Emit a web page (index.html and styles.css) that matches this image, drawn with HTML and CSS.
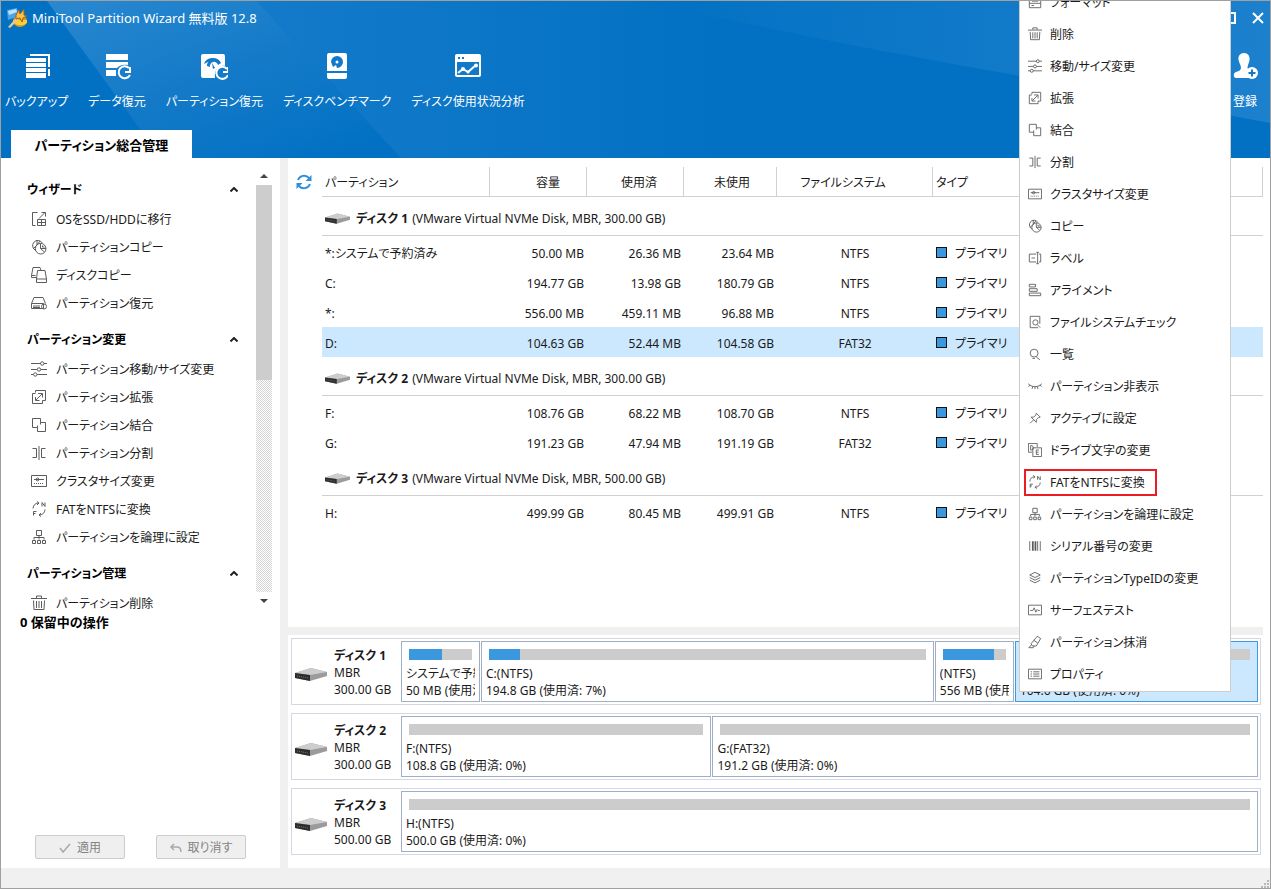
FILE: index.html
```html
<!DOCTYPE html>
<html lang="ja">
<head>
  <meta charset="utf-8">
  <meta name="viewport" content="width=device-width, initial-scale=1.0">
  <title>MiniTool Partition Wizard</title>
  <link rel="stylesheet" href="styles.css">
</head>
<body>

  <!-- icons -->
  <svg class="sprite" aria-hidden="true">
    <symbol id="i-migrate" viewBox="0 0 16 16"><path d="M6.5 1.5h-5v13h3M6.500 8.500v6h8v-6zM6.500 11.500h8M10.500 8.500v6M8 7.500l6-6M10.500 1.500h4v4"/></symbol>
    <symbol id="i-copy" viewBox="0 0 16 16"><path d="M5 11.500A5.200 5.200 0 1 1 11.300 4M6 1v5L2.500 9.500M6 6l3-4"/><circle cx="9.700" cy="9.700" r="5.300"/><path d="M9.500 4.500v5h5.500M9.500 9.500l4 3.500M11.500 6.500v1.500h2"/></symbol>
    <symbol id="i-diskcopy" viewBox="0 0 16 16"><path d="M5.500 10.500h-5v-2l1.500-8h7l1 3M.500 8.500h4"/><path d="M6.500 3.500h7.500l1.500 8.500v3.500h-10v-3.500zM5.500 12h10"/></symbol>
    <symbol id="i-recover" viewBox="0 0 16 16"><path d="M.500 8.500l2.500-6h9l2.500 6M.500 8.500h12v5h-12zM2 11h7M2 12.500h7"/><circle class="solid" cx="13" cy="11.500" r="2.500"/></symbol>
    <symbol id="i-move" viewBox="0 0 16 16"><path d="M0 2.500h9.500M13 2.500h3M0 8.500h6M10 8.500h6M0 13.500h2.500M6 13.500h10"/><circle cx="11.200" cy="2.500" r="1.700"/><circle cx="8" cy="8.500" r="1.700"/><circle cx="4.300" cy="13.500" r="1.700"/></symbol>
    <symbol id="i-extend" viewBox="0 0 16 16"><path d="M4.500 3.500v-2h10v10h-3M4.500 4.500h-3v10h10v-3M5 11l6-6M7 4.500h4.500v4M4.500 8v3.500h4"/></symbol>
    <symbol id="i-merge" viewBox="0 0 16 16"><path d="M1.500 1.500h8v4h5v9h-8v-4h-5zM9.500 5.500v2M6.500 10.500v-2"/></symbol>
    <symbol id="i-split" viewBox="0 0 16 16"><path d="M1.500 3.500h4v9h-4M14.500 3.500h-4v9h4M8 1v14"/></symbol>
    <symbol id="i-cluster" viewBox="0 0 16 16"><path d="M.500 2.500h15v11h-15zM3 6.500h10"/><path d="M3 10.500h10" stroke-dasharray="1 1"/><circle cx="6.500" cy="6.500" r="1.400"/></symbol>
    <symbol id="i-convert" viewBox="0 0 16 16"><path d="M2 7.500A6 6 0 0 1 7.500 2M6 .500l2 1.500-2 2M14 8.500A6 6 0 0 1 8.500 14M10 12l-2 2 2 1.500M11 5.500v-4l3 4v-4M2.500 14.500v-4h3M2.500 12.500h2"/></symbol>
    <symbol id="i-logical" viewBox="0 0 16 16"><path d="M5.500 1.500h5v5h-5zM8 6.500v4M3 10.500v-2h10v2M1.500 11.500h3v3h-3zM6.500 11.500h3v3h-3zM11.500 11.500h3v3h-3z"/></symbol>
    <symbol id="i-delete" viewBox="0 0 16 16"><path d="M0 3.500h16M5.500 3v-2h5v2M2.500 5.500l.5 9h10l.5-9M5.500 6v7M8 6v7M10.500 6v7"/></symbol>
    <symbol id="i-format" viewBox="0 0 16 16"><path d="M1.500 2.500h13v12h-13zM1.500 9.500h13M4 12h3M4.500 7h7v-4"/></symbol>
    <symbol id="i-label" viewBox="0 0 16 16"><path d="M9.500 3.500h-8v9h8M12.500 3.500h2v9h-2M11 1.500v13M9.500 1.500h3M9.500 14.500h3M4 8h4"/></symbol>
    <symbol id="i-align" viewBox="0 0 16 16"><path d="M1.500 1.500h7v3h-7zM1.500 6.500h9v3h-9zM1.500 11.500h13v3h-13z"/></symbol>
    <symbol id="i-check" viewBox="0 0 16 16"><path d="M13.500 10v-8.500h-11v13h9"/><circle cx="8.500" cy="8.500" r="3"/><path d="M10.500 11l3.500 3.500"/></symbol>
    <symbol id="i-search" viewBox="0 0 16 16"><circle cx="7" cy="7" r="4.500"/><path d="M9.500 11.500l4 3M5 13h3"/></symbol>
    <symbol id="i-hide" viewBox="0 0 16 16"><path d="M0 5c3 5 13 5 16 0M2.500 7l-2 1.500M5.500 8.500l-1 3M10.500 8.500l1 3M13.500 7l2 1.500M8 9v2.500"/></symbol>
    <symbol id="i-pin" viewBox="0 0 16 16"><path d="M9.500 2.500l4.500 4.500-2 .5-2.500 2.500v3l-6-6h3l2.500-2.500zM6.500 10l-4 4"/></symbol>
    <symbol id="i-letter" viewBox="0 0 16 16"><path d="M4.500 10.500h-4v-10h10v4M3 3v5h1.500c2 0 2-5 0-5zM5.500 5.500h10v10h-10zM12.500 8h-3v5h3M9.500 10.500h2.500"/></symbol>
    <symbol id="i-serial" viewBox="0 0 16 16"><path d="M2 2.500v11M14 2.500v11M11 2.500v11"/><path d="M5.500 2.500v11M8.500 2.500v11" stroke-width="2"/></symbol>
    <symbol id="i-type" viewBox="0 0 16 16"><path d="M8 1.500l6 3-6 3-6-3zM2 7.500l6 3 6-3M2 10.500l6 3 6-3"/></symbol>
    <symbol id="i-surface" viewBox="0 0 16 16"><path d="M.500 2.500h15v11h-15zM2.500 8.500h3l1.500-3 2 5 1.500-3 1 1h2"/></symbol>
    <symbol id="i-wipe" viewBox="0 0 16 16"><path d="M10.500 1.500l4 2.500-5 8.500h-4.500l-1.500-2.500zM6.500 6l4.500 3M4 11l-3 3.500h5l1-2"/></symbol>
    <symbol id="i-props" viewBox="0 0 16 16"><path d="M.500 2.500h15v11h-15zM3 5.500h1.500M6 5.500h7M3 8h1.500M6 8h7M3 10.500h1.500M6 10.500h7"/></symbol>
    <symbol id="i-drive" viewBox="0 0 32 14">
      <polygon points="0,5 16,0 32,4 32,8 15,13 0,10" fill="#9b9b9b"/>
      <polygon points="0,5 16,0 32,4 15,7" fill="#cdcdcd"/>
      <polygon points="0,5 15,7 15,13 0,10" fill="#2d2d2d"/>
      <path d="M2 8l11 2" stroke="#777" stroke-dasharray="1 1"/>
    </symbol>
  </svg>

  <div class="window">
    <header class="header">
      <svg class="header-bg" viewBox="0 0 1269 157" preserveAspectRatio="none" aria-hidden="true">
        <defs>
          <linearGradient id="beam" x1="0" y1="0" x2=".8" y2="1">
            <stop offset="0" stop-color="#3a92d5"/>
            <stop offset=".55" stop-color="#1a7dca"/>
            <stop offset="1" stop-color="#0271c3"/>
          </linearGradient>
          <linearGradient id="wide" x1="0" y1="0" x2="1" y2="0">
            <stop offset="0" stop-color="#147aca"/>
            <stop offset="1" stop-color="#0271c3"/>
          </linearGradient>
          <linearGradient id="sweep" x1="0" y1="0" x2="1" y2="0">
            <stop offset="0" stop-color="#0271c3"/>
            <stop offset="1" stop-color="#1c80cd"/>
          </linearGradient>
        </defs>
        <rect width="1269" height="157" fill="#0271c3"/>
        <polygon points="46,0 256,0 400,157 160,157" fill="url(#beam)" opacity=".7"/>
        <polygon points="256,0 720,0 720,157 400,157" fill="url(#wide)"/>
        <path d="M640 0H1269V122Q1140 98 1014 74Q820 40 640 0z" fill="url(#sweep)"/>
      </svg>

      <div class="titlebar">
        <svg class="logo" viewBox="0 0 22 22" aria-hidden="true">
          <ellipse cx="14" cy="14" rx="7" ry="6" fill="#d99a1e"/>
          <path d="M7 14a8 6 0 0 0 14 2v-3H7z" fill="#f8cf3c"/>
          <path d="M1 3l10-2 2 8-11 4z" fill="#4ea3e4"/>
          <path d="M2 4l8-2 1 3-8 3z" fill="#bfe3fb"/>
          <path d="M2 20l9-10 2 2-9 9z" fill="#e9c88c"/>
          <path d="M10 8l3-5 1 4 4-5v6l3 1-4 2-1 4-2-4-4 1z" fill="#f6c14a" stroke="#a35f15"/>
        </svg>
        <span class="title">MiniTool Partition Wizard 無料版 12.8</span>
        <div class="window-buttons">
          <button type="button" aria-label="最大化"><svg viewBox="0 0 12 12"><path d="M1 1h10v10H1z"/></svg></button>
          <button type="button" aria-label="閉じる"><svg viewBox="0 0 12 12"><path d="M1 1l10 10M11 1L1 11"/></svg></button>
        </div>
      </div>

      <nav class="toolbar">
        <button type="button" class="tool">
          <svg viewBox="0 0 28 28"><path d="M7 1h20v13h-2V3H7zM25 16h2v7h-2z"/><path d="M3 5h20v4H3zM3 10h20v4H3zM3 15h20v4H3zM3 20h20v5H3z"/></svg>
          <span>バックアップ</span>
        </button>
        <button type="button" class="tool">
          <svg viewBox="0 0 28 28"><path d="M3 1h22v6H3zM3 9h22v3c-6-1-9 1-11 3H3zM3 17h10v6H3z"/><path class="line" d="M26 15a6 6 0 1 0 1 7M27 14v5h-5"/></svg>
          <span>データ復元</span>
        </button>
        <button type="button" class="tool">
          <svg viewBox="0 0 28 28"><path d="M1 3a2 2 0 0 1 2-2h20a2 2 0 0 1 2 2v10c-6-1-11 4-10 12H3a2 2 0 0 1-2-2z"/><path class="cut" d="M4 11a9 8 0 0 1 17-1l-3 2a4 4 0 0 0-8 2l-3-1a5 5 0 0 1 3-5zM12 10l3 5-2 1z"/><path class="line" d="M27 16a6 6 0 1 0 1 6M28 14v5h-5"/></svg>
          <span>パーティション復元</span>
        </button>
        <button type="button" class="tool">
          <svg viewBox="0 0 28 28"><path d="M4 2a2 2 0 0 1 2-2h16a2 2 0 0 1 2 2v16H4zM4 20h20v4a2 2 0 0 1-2 2H6a2 2 0 0 1-2-2z"/><path class="cut" d="M8 9a6 6 0 1 1 6 6l-1-3-3 2z"/><circle cx="14" cy="9" r="1.500"/></svg>
          <span>ディスクベンチマーク</span>
        </button>
        <button type="button" class="tool">
          <svg viewBox="0 0 28 28"><path d="M1 3a2 2 0 0 1 2-2h22a2 2 0 0 1 2 2v19a2 2 0 0 1-2 2H3a2 2 0 0 1-2-2z"/><path class="cut" d="M4 4h2v2H4zM8 4h2v2H8zM3 9h22v13H3z"/><path class="line" d="M4 20l5-4 5 3 8-7"/><circle cx="9" cy="16" r="2"/><circle cx="14" cy="19" r="1.500"/><circle cx="22" cy="12.500" r="2"/></svg>
          <span>ディスク使用状況分析</span>
        </button>
        <button type="button" class="tool register">
          <svg viewBox="0 0 28 28"><path d="M13 0c4 0 6 3 5.500 7-.3 3-2 5-2 8l1 2c-2 3-1 6 1 8H5c-3 0-3-5 0-6 3-1 5-2 5-4 0-3-2-5-2.500-8C7 3 9 0 13 0z"/><circle cx="21" cy="20" r="6"/><path class="plus" d="M21 16.500v7M17.500 20h7"/></svg>
          <span>登録</span>
        </button>
      </nav>

      <div class="tabs"><button type="button" class="tab">パーティション総合管理</button></div>
    </header>

    <div class="body">
      <aside class="sidebar">
        <div class="actions">
          <div class="action-list">
            <h2>ウィザード<svg viewBox="0 0 8 5"><path d="M.500 4.500L4 1l3.500 3.500"/></svg></h2>
            <ul>
              <li><button type="button"><svg class="icon"><use href="#i-migrate"/></svg>OSをSSD/HDDに移行</button></li>
              <li><button type="button"><svg class="icon"><use href="#i-copy"/></svg>パーティションコピー</button></li>
              <li><button type="button"><svg class="icon"><use href="#i-diskcopy"/></svg>ディスクコピー</button></li>
              <li><button type="button"><svg class="icon"><use href="#i-recover"/></svg>パーティション復元</button></li>
            </ul>
            <h2>パーティション変更<svg viewBox="0 0 8 5"><path d="M.500 4.500L4 1l3.500 3.500"/></svg></h2>
            <ul>
              <li><button type="button"><svg class="icon"><use href="#i-move"/></svg>パーティション移動/サイズ変更</button></li>
              <li><button type="button"><svg class="icon"><use href="#i-extend"/></svg>パーティション拡張</button></li>
              <li><button type="button"><svg class="icon"><use href="#i-merge"/></svg>パーティション結合</button></li>
              <li><button type="button"><svg class="icon"><use href="#i-split"/></svg>パーティション分割</button></li>
              <li><button type="button"><svg class="icon"><use href="#i-cluster"/></svg>クラスタサイズ変更</button></li>
              <li><button type="button"><svg class="icon"><use href="#i-convert"/></svg>FATをNTFSに変換</button></li>
              <li><button type="button"><svg class="icon"><use href="#i-logical"/></svg>パーティションを論理に設定</button></li>
            </ul>
            <h2>パーティション管理<svg viewBox="0 0 8 5"><path d="M.500 4.500L4 1l3.500 3.500"/></svg></h2>
            <ul>
              <li><button type="button"><svg class="icon"><use href="#i-delete"/></svg>パーティション削除</button></li>
            </ul>
          </div>
          <div class="scrollbar">
            <svg viewBox="0 0 8 4"><path d="M0 4l4-4 4 4z"/></svg>
            <div class="track"><div class="thumb"></div></div>
            <svg viewBox="0 0 8 4"><path d="M0 0h8L4 4z"/></svg>
          </div>
        </div>
        <p class="pending">0 保留中の操作</p>
        <div class="buttons">
          <button type="button" disabled><svg viewBox="0 0 12 12"><path d="M1 6l3 4 7-8"/></svg>適用</button>
          <button type="button" disabled><svg viewBox="0 0 12 12"><path d="M4 2L1 5l3 3M1 5h6c3 0 4 2 4 5"/></svg>取り消す</button>
        </div>
      </aside>

      <main class="main">
        <div class="list">
          <button type="button" class="refresh" aria-label="更新">
            <svg viewBox="0 0 16 16"><path d="M2 6a6.500 6.500 0 0 1 11-2M14 10a6.500 6.500 0 0 1-11 2"/><path class="tip" d="M15.500 1v6h-6zM.500 15V9h6z"/></svg>
          </button>
          <table class="partitions">
            <colgroup>
              <col class="c-name"><col class="c-size"><col class="c-size"><col class="c-free"><col class="c-fs"><col>
            </colgroup>
            <thead>
              <tr><th>パーティション</th><th class="num">容量</th><th class="num">使用済</th><th class="num">未使用</th><th class="fs">ファイルシステム</th><th>タイプ</th></tr>
            </thead>
            <tbody>
              <tr class="disk"><td colspan="6"><div><svg><use href="#i-drive"/></svg><b>ディスク 1</b> (VMware Virtual NVMe Disk, MBR, 300.00 GB)</div></td></tr>
              <tr><td>*:システムで予約済み</td><td class="num">50.00 MB</td><td class="num">26.36 MB</td><td class="num">23.64 MB</td><td class="fs">NTFS</td><td class="type">プライマリ</td></tr>
              <tr><td>C:</td><td class="num">194.77 GB</td><td class="num">13.98 GB</td><td class="num">180.79 GB</td><td class="fs">NTFS</td><td class="type">プライマリ</td></tr>
              <tr><td>*:</td><td class="num">556.00 MB</td><td class="num">459.11 MB</td><td class="num">96.88 MB</td><td class="fs">NTFS</td><td class="type">プライマリ</td></tr>
              <tr class="selected"><td>D:</td><td class="num">104.63 GB</td><td class="num">52.44 MB</td><td class="num">104.58 GB</td><td class="fs">FAT32</td><td class="type">プライマリ</td></tr>
              <tr class="disk"><td colspan="6"><div><svg><use href="#i-drive"/></svg><b>ディスク 2</b> (VMware Virtual NVMe Disk, MBR, 300.00 GB)</div></td></tr>
              <tr><td>F:</td><td class="num">108.76 GB</td><td class="num">68.22 MB</td><td class="num">108.70 GB</td><td class="fs">NTFS</td><td class="type">プライマリ</td></tr>
              <tr><td>G:</td><td class="num">191.23 GB</td><td class="num">47.94 MB</td><td class="num">191.19 GB</td><td class="fs">FAT32</td><td class="type">プライマリ</td></tr>
              <tr class="disk"><td colspan="6"><div><svg><use href="#i-drive"/></svg><b>ディスク 3</b> (VMware Virtual NVMe Disk, MBR, 500.00 GB)</div></td></tr>
              <tr><td>H:</td><td class="num">499.99 GB</td><td class="num">80.45 MB</td><td class="num">499.91 GB</td><td class="fs">NTFS</td><td class="type">プライマリ</td></tr>
            </tbody>
          </table>
        </div>

        <div class="splitter"></div>

        <div class="disk-map">
          <section class="disk-row">
            <svg><use href="#i-drive"/></svg>
            <div class="disk-info"><b>ディスク 1</b><br>MBR<br>300.00 GB</div>
            <div class="parts" style="grid-template-columns: 79px 194.8fr 79px 104.6fr">
              <div class="part"><div class="bar"><div class="used" style="width: 52%"></div></div><p>システムで予約済み</p><p>50 MB (使用済: 52%)</p></div>
              <div class="part"><div class="bar"><div class="used" style="width: 7%"></div></div><p>C:(NTFS)</p><p>194.8 GB (使用済: 7%)</p></div>
              <div class="part"><div class="bar"><div class="used" style="width: 82%"></div></div><p>(NTFS)</p><p>556 MB (使用済: 82%)</p></div>
              <div class="part active"><div class="bar"></div><p>D:(FAT32)</p><p>104.6 GB (使用済: 0%)</p></div>
            </div>
          </section>
          <section class="disk-row">
            <svg><use href="#i-drive"/></svg>
            <div class="disk-info"><b>ディスク 2</b><br>MBR<br>300.00 GB</div>
            <div class="parts" style="grid-template-columns: 108.8fr 191.2fr">
              <div class="part"><div class="bar"></div><p>F:(NTFS)</p><p>108.8 GB (使用済: 0%)</p></div>
              <div class="part"><div class="bar"></div><p>G:(FAT32)</p><p>191.2 GB (使用済: 0%)</p></div>
            </div>
          </section>
          <section class="disk-row">
            <svg><use href="#i-drive"/></svg>
            <div class="disk-info"><b>ディスク 3</b><br>MBR<br>500.00 GB</div>
            <div class="parts" style="grid-template-columns: 500fr">
              <div class="part"><div class="bar"></div><p>H:(NTFS)</p><p>500.0 GB (使用済: 0%)</p></div>
            </div>
          </section>
        </div>
      </main>
    </div>

    <footer class="statusbar">
      <svg viewBox="0 0 8 8"><path d="M6 0h2v2H6zM3 3h2v2H3zM6 3h2v2H6zM0 6h2v2H0zM3 6h2v2H3zM6 6h2v2H6z"/></svg>
    </footer>

    <!-- right click menu -->
    <div class="menu">
      <button type="button"><svg class="icon"><use href="#i-format"/></svg>フォーマット</button>
      <button type="button"><svg class="icon"><use href="#i-delete"/></svg>削除</button>
      <button type="button"><svg class="icon"><use href="#i-move"/></svg>移動/サイズ変更</button>
      <button type="button"><svg class="icon"><use href="#i-extend"/></svg>拡張</button>
      <button type="button"><svg class="icon"><use href="#i-merge"/></svg>結合</button>
      <button type="button"><svg class="icon"><use href="#i-split"/></svg>分割</button>
      <button type="button"><svg class="icon"><use href="#i-cluster"/></svg>クラスタサイズ変更</button>
      <button type="button"><svg class="icon"><use href="#i-copy"/></svg>コピー</button>
      <button type="button"><svg class="icon"><use href="#i-label"/></svg>ラベル</button>
      <button type="button"><svg class="icon"><use href="#i-align"/></svg>アライメント</button>
      <button type="button"><svg class="icon"><use href="#i-check"/></svg>ファイルシステムチェック</button>
      <button type="button"><svg class="icon"><use href="#i-search"/></svg>一覧</button>
      <button type="button"><svg class="icon"><use href="#i-hide"/></svg>パーティション非表示</button>
      <button type="button"><svg class="icon"><use href="#i-pin"/></svg>アクティブに設定</button>
      <button type="button"><svg class="icon"><use href="#i-letter"/></svg>ドライブ文字の変更</button>
      <button type="button" class="marked"><svg class="icon"><use href="#i-convert"/></svg>FATをNTFSに変換</button>
      <button type="button"><svg class="icon"><use href="#i-logical"/></svg>パーティションを論理に設定</button>
      <button type="button"><svg class="icon"><use href="#i-serial"/></svg>シリアル番号の変更</button>
      <button type="button"><svg class="icon"><use href="#i-type"/></svg>パーティションTypeIDの変更</button>
      <button type="button"><svg class="icon"><use href="#i-surface"/></svg>サーフェステスト</button>
      <button type="button"><svg class="icon"><use href="#i-wipe"/></svg>パーティション抹消</button>
      <button type="button"><svg class="icon"><use href="#i-props"/></svg>プロパティ</button>
    </div>
  </div>

</body>
</html>
```
FILE: styles.css
```css
*,
*::before,
*::after {
  box-sizing: border-box;
}

body {
  margin: 0;
  font-family: "Noto Sans", "Noto Sans CJK JP", sans-serif;
  font-size: 12px;
  line-height: 17px;
  font-feature-settings: "palt";
  color: #1a1a1a;
}

button {
  font: inherit;
  font-feature-settings: inherit;
  color: inherit;
  background: none;
  border: none;
  padding: 0;
  white-space: nowrap;
}

h2, p, ul {
  margin: 0;
  padding: 0;
}

ul {
  list-style: none;
}

.sprite {
  position: absolute;
  width: 0;
  height: 0;
}

.icon {
  width: 16px;
  height: 16px;
  flex: none;
  fill: none;
  stroke: #5c5c5c;
}

.icon .solid {
  fill: #333;
}

.window {
  position: relative;
  display: flex;
  flex-direction: column;
  height: 100vh;
  border: 1px solid #a0a0a0;
  overflow: hidden;
  background: #fff;
}

/* header */
.header {
  position: relative;
  display: flex;
  flex-direction: column;
  height: 157px;
  flex: none;
  color: #fff;
}

.header-bg {
  position: absolute;
  inset: 0;
  width: 100%;
  height: 100%;
}

.titlebar {
  position: relative;
  display: flex;
  align-items: center;
  gap: 4px;
  height: 34px;
  padding: 0 6px 0 5px;
}

.title {
  font-size: 13px;
}

.logo {
  width: 22px;
  height: 22px;
}

.window-buttons {
  display: flex;
  gap: 16px;
  margin-left: auto;
}

.window-buttons button {
  display: flex;
}

.window-buttons svg {
  width: 12px;
  height: 12px;
  fill: none;
  stroke: #fff;
  stroke-width: 2;
}

.toolbar {
  position: relative;
  display: flex;
  gap: 20px;
  padding: 18px 11px 0 4px;
  flex: 1;
}

.tool {
  display: flex;
  flex-direction: column;
  align-items: center;
  gap: 12px;
  height: 58px;
}

.tool svg {
  width: 28px;
  height: 28px;
  fill: #fff;
}

.tool .cut {
  fill: #1378c8;
}

.tool .line {
  fill: none;
  stroke: #fff;
  stroke-width: 2;
}

.tool .plus {
  stroke: #1378c8;
  stroke-width: 2;
}

.register {
  margin-left: auto;
}

.tabs {
  position: relative;
  display: flex;
  padding-left: 10px;
}

.tab {
  height: 28px;
  width: 181px;
  padding-top: 2px;
  background: #fff;
  color: #000;
  font-size: 13px;
  font-weight: bold;
}

/* body */
.body {
  display: flex;
  flex: 1;
  min-height: 0;
}

.sidebar {
  display: flex;
  flex-direction: column;
  width: 279px;
  flex: none;
}

.actions {
  display: flex;
  justify-content: space-between;
  height: 443px;
  margin: 9px 8px 0 26px;
}

.action-list {
  width: 211px;
  height: 100%;
  overflow: hidden;
}

.action-list h2 {
  display: flex;
  align-items: center;
  justify-content: space-between;
  height: 38px;
  padding-top: 6px;
  font-size: 12px;
  color: #000;
}

.action-list h2 svg {
  width: 8px;
  height: 5px;
  fill: none;
  stroke: #222;
  stroke-width: 2;
}

.action-list li button {
  display: flex;
  align-items: center;
  gap: 9px;
  height: 28px;
  padding-left: 4px;
}

.scrollbar {
  display: flex;
  flex-direction: column;
  align-items: center;
  width: 16px;
}

.scrollbar svg {
  width: 8px;
  height: 4px;
  margin: 7px 0;
  fill: #444;
}

.track {
  width: 16px;
  flex: 1;
  background: repeating-conic-gradient(#d4d4d4 0% 25%, #fff 0% 50%) 0 0 / 2px 2px;
}

.thumb {
  height: 48%;
  background: #cdcdcd;
}

.pending {
  padding: 4px 0 0 19px;
  font-size: 13px;
  font-weight: bold;
  color: #000;
}

.buttons {
  display: flex;
  gap: 31px;
  margin-top: auto;
  padding: 0 0 9px 34px;
}

.buttons button {
  display: flex;
  align-items: center;
  justify-content: center;
  gap: 6px;
  width: 90px;
  height: 24px;
  padding-top: 1px;
  background: #efefef;
  border: 1px solid #ccc;
  border-radius: 2px;
  color: #838383;
}

.buttons svg {
  width: 12px;
  height: 12px;
  fill: none;
  stroke: #aaa;
  stroke-width: 1.5;
}

.main {
  display: flex;
  flex-direction: column;
  flex: 1;
  min-width: 0;
  border-left: 8px solid #f0f0f0;
}

.list {
  display: flex;
  align-items: flex-start;
  flex: 1;
  padding: 9px 7px 0 8px;
}

.refresh {
  display: flex;
  width: 26px;
  flex: none;
  padding-top: 7px;
}

.refresh svg {
  width: 16px;
  height: 16px;
  fill: none;
  stroke: #2f8fdb;
  stroke-width: 2;
}

.refresh .tip {
  fill: #2f8fdb;
  stroke: none;
}

.partitions {
  flex: 1;
  table-layout: fixed;
  border-collapse: separate;
  border-spacing: 0;
}

.c-name {
  width: 168px;
}

.c-size {
  width: 97px;
}

.c-free {
  width: 93px;
}

.c-fs {
  width: 156px;
}

.partitions th {
  height: 30px;
  padding: 2px 3px 0;
  border-right: 1px solid #d0d0d0;
  border-bottom: 1px solid #d0d0d0;
  font-weight: normal;
  text-align: left;
}

.partitions td {
  height: 30px;
  padding: 2px 3px 0;
}

.partitions .num {
  text-align: right;
}

.partitions .fs {
  text-align: center;
}

.partitions th.num,
.partitions th.fs {
  padding-right: 26px;
}

.partitions .disk td {
  height: 40px;
  padding: 0;
}

.disk div {
  display: flex;
  align-items: center;
  gap: 4px;
  height: 39px;
  margin-bottom: 1px;
  padding: 4px 3px 0;
  border-bottom: 1px solid #d0d0d0;
}

.disk svg {
  width: 25px;
  height: 12px;
  margin: 2px 2px 0 0;
}

.selected td {
  background: #cce8ff;
}

.type::before {
  content: "";
  display: inline-block;
  width: 11px;
  height: 11px;
  margin-right: 8px;
  border: 1px solid #111;
  background: #3b97de;
}

.splitter {
  height: 8px;
  margin-right: 7px;
  background: #f0f0f0;
}

/* disk map */
.disk-map {
  display: flex;
  flex-direction: column;
  gap: 8px;
  padding: 3px 9px 13px 3px;
}

.disk-row {
  display: flex;
  align-items: center;
  height: 67px;
  padding: 0 2px 0 3px;
  border: 1px solid #d5d8e2;
}

.disk-row > svg {
  width: 32px;
  height: 14px;
  margin-top: 6px;
}

.disk-info {
  width: 67px;
  margin: 2px 0 0 7px;
}

.parts {
  display: grid;
  flex: 1;
  gap: 1px;
  min-width: 0;
}

.part {
  min-width: 0;
  height: 61px;
  padding: 7px 4px 0;
  border: 1px solid #9fadc6;
}

.part.active {
  background: #cce8ff;
  border-color: #4499dc;
}

.part p {
  overflow: hidden;
  white-space: nowrap;
}

.bar {
  height: 11px;
  margin: 0 3px 5px;
  background: #ccc;
}

.used {
  height: 100%;
  background: #3b97de;
}

.statusbar {
  display: flex;
  justify-content: flex-end;
  align-items: flex-end;
  height: 20px;
  flex: none;
  background: #f0f0f0;
}

.statusbar svg {
  width: 8px;
  height: 8px;
  margin-right: 1px;
  fill: #b8b8b8;
}

/* context menu */
.menu {
  position: absolute;
  top: -16px;
  right: 39px;
  width: 212px;
  padding-bottom: 1px;
  border: 1px solid #ccc;
  background: #fff;
}

.menu button {
  position: relative;
  display: flex;
  align-items: center;
  gap: 8px;
  width: 100%;
  height: 32px;
  padding-left: 8px;
}

.menu .icon {
  width: 14px;
  height: 14px;
}

.marked::after {
  content: "";
  position: absolute;
  top: 3px;
  left: 4px;
  width: 133px;
  height: 27px;
  border: 2px solid #ed1c24;
}
```
